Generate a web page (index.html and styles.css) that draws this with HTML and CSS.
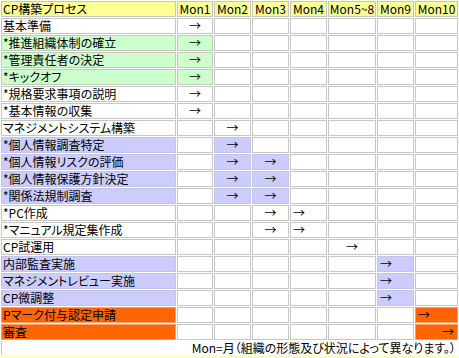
FILE: index.html
```html
<!DOCTYPE html>
<html lang="ja">
<head>
<meta charset="utf-8">
<title>CP構築プロセス</title>
<link rel="stylesheet" href="styles.css">
</head>
<body>
<table class="plan">
  <colgroup>
    <col class="c-name"><col class="c-m1"><col class="c-m"><col class="c-m"><col class="c-m"><col class="c-m58"><col class="c-m"><col class="c-m10">
  </colgroup>
  <thead>
    <tr><th class="name">CP構築プロセス</th><th>Mon1</th><th>Mon2</th><th>Mon3</th><th>Mon4</th><th>Mon5~8</th><th>Mon9</th><th>Mon10</th></tr>
  </thead>
  <tbody>
    <tr><td class="name">基本準備</td><td>→</td><td></td><td></td><td></td><td></td><td></td><td></td></tr>
    <tr><td class="name g">*推進組織体制の確立</td><td class="g">→</td><td></td><td></td><td></td><td></td><td></td><td></td></tr>
    <tr><td class="name g">*管理責任者の決定</td><td class="g">→</td><td></td><td></td><td></td><td></td><td></td><td></td></tr>
    <tr><td class="name g">*キックオフ</td><td class="g">→</td><td></td><td></td><td></td><td></td><td></td><td></td></tr>
    <tr><td class="name">*規格要求事項の説明</td><td>→</td><td></td><td></td><td></td><td></td><td></td><td></td></tr>
    <tr><td class="name">*基本情報の収集</td><td>→</td><td></td><td></td><td></td><td></td><td></td><td></td></tr>
    <tr><td class="name">マネジメントシステム構築</td><td></td><td>→</td><td></td><td></td><td></td><td></td><td></td></tr>
    <tr><td class="name p">*個人情報調査特定</td><td></td><td class="p">→</td><td></td><td></td><td></td><td></td><td></td></tr>
    <tr><td class="name p">*個人情報リスクの評価</td><td></td><td class="p">→</td><td class="p">→</td><td></td><td></td><td></td><td></td></tr>
    <tr><td class="name p">*個人情報保護方針決定</td><td></td><td class="p">→</td><td class="p">→</td><td></td><td></td><td></td><td></td></tr>
    <tr><td class="name p">*関係法規制調査</td><td></td><td class="p">→</td><td class="p">→</td><td></td><td></td><td></td><td></td></tr>
    <tr><td class="name">*PC作成</td><td></td><td></td><td>→</td><td class="l">→</td><td></td><td></td><td></td></tr>
    <tr><td class="name">*マニュアル規定集作成</td><td></td><td></td><td>→</td><td class="l">→</td><td></td><td></td><td></td></tr>
    <tr><td class="name">CP試運用</td><td></td><td></td><td></td><td></td><td>→</td><td></td><td></td></tr>
    <tr><td class="name p">内部監査実施</td><td></td><td></td><td></td><td></td><td></td><td class="p l">→</td><td></td></tr>
    <tr><td class="name p">マネジメントレビュー実施</td><td></td><td></td><td></td><td></td><td></td><td class="p l">→</td><td></td></tr>
    <tr><td class="name p">CP微調整</td><td></td><td></td><td></td><td></td><td></td><td class="p l">→</td><td></td></tr>
    <tr><td class="name o">Pマーク付与認定申請</td><td></td><td></td><td></td><td></td><td></td><td></td><td class="o l">→</td></tr>
    <tr><td class="name o">審査</td><td></td><td></td><td></td><td></td><td></td><td></td><td class="o r">→</td></tr>
  </tbody>
</table>
<div class="note">Mon=月（組織の形態及び状況によって異なります。）</div>
<div class="strip"></div>
</body>
</html>
```
FILE: styles.css
```css
html, body {
  margin: 0;
  padding: 0;
  background: #ffffff;
}

body {
  font-family: "Noto Sans CJK JP", "Noto Sans", sans-serif;
  font-size: 12px;
  color: #000000;
  font-feature-settings: "palt";
}

.plan {
  border-collapse: separate;
  border-spacing: 1px;
  table-layout: fixed;
  width: 459px;
}

.c-name { width: 175px; }
.c-m1 { width: 36px; }
.c-m { width: 37px; }
.c-m58 { width: 48px; }
.c-m10 { width: 43px; }

.plan th,
.plan td {
  border: 1px solid #c6c6c6;
  padding: 0;
  line-height: 14px;
  text-align: center;
  font-weight: normal;
  white-space: nowrap;
  overflow: hidden;
  background: #ffffff;
}

.plan th {
  background: #ffff99;
}

.plan .name {
  text-align: left;
  padding-left: 1px;
}

.plan .l {
  text-align: left;
  padding-left: 2px;
}

.plan .r {
  text-align: right;
  padding-right: 3px;
}

.plan .g {
  background: #ccffcc;
}

.plan .p {
  background: #ccccff;
  border-color: #c4c4e6;
}

.plan .o {
  background: #ff6600;
  border-color: #f0a070;
}

.note {
  margin-left: 1px;
  border-left: 1px solid #c6c6c6;
  height: 14px;
  line-height: 14px;
  text-align: right;
  padding-right: 3px;
}

.strip {
  height: 3px;
  background: #ffffcc;
}
```
